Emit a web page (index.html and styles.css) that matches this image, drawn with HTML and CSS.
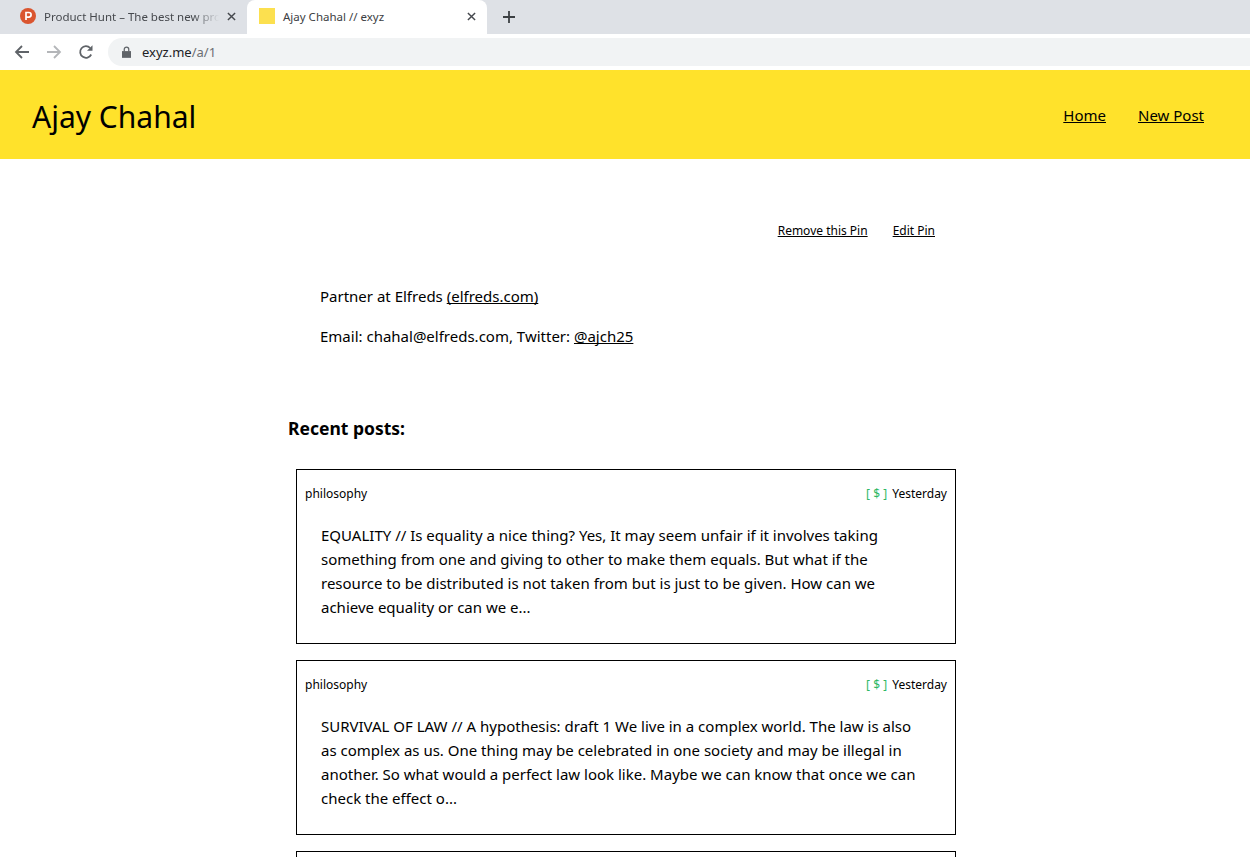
FILE: index.html
```html
<!DOCTYPE html>
<html lang="en">
<head>
    <meta charset="UTF-8">
    <title>Ajay Chahal // exyz</title>
    <link rel="stylesheet" href="styles.css">
</head>
<body>

<!-- Browser tabs -->
<div class="tabbar">
    <div class="tab">
        <svg class="favicon" viewBox="0 0 16 16"><circle cx="8" cy="8" r="8" fill="#da552f"/><path d="M6 12V4.5h2.8a2.3 2.3 0 0 1 0 4.6H6" fill="none" stroke="#fff" stroke-width="1.7"/></svg>
        <span class="tab-title tab-title-fade">Product Hunt – The best new pro</span>
        <svg class="tab-close" viewBox="0 0 10 10"><path d="M1 1l8 8M9 1l-8 8" stroke="#45484d" stroke-width="1.6"/></svg>
    </div>
    <div class="tab tab-active">
        <span class="favicon-square"></span>
        <span class="tab-title">Ajay Chahal // exyz</span>
        <svg class="tab-close" viewBox="0 0 10 10"><path d="M1 1l8 8M9 1l-8 8" stroke="#45484d" stroke-width="1.6"/></svg>
    </div>
    <svg class="new-tab" viewBox="0 0 12 12"><path d="M6 0v12M0 6h12" stroke="#3c4043" stroke-width="1.8"/></svg>
</div>

<!-- Browser toolbar -->
<div class="toolbar">
    <svg class="nav-icon" viewBox="0 0 16 16"><path d="M15 8H2M8 2L2 8l6 6" fill="none" stroke="#5f6368" stroke-width="1.8"/></svg>
    <svg class="nav-icon" viewBox="0 0 16 16"><path d="M1 8h13M8 2l6 6-6 6" fill="none" stroke="#b4b6b9" stroke-width="1.8"/></svg>
    <svg class="nav-icon" viewBox="0 0 16 16"><path d="M13.2 10.5A5.8 5.8 0 1 1 12.2 4" fill="none" stroke="#5f6368" stroke-width="1.8"/><path d="M14.5 1.2v5.6H9z" fill="#5f6368"/></svg>
    <div class="omnibox">
        <svg class="lock" viewBox="0 0 10 13"><path d="M0 5.5h10V13H0z" fill="#5f6368"/><path d="M2.5 6V3.5a2.5 2.5 0 0 1 5 0V6" fill="none" stroke="#5f6368" stroke-width="1.4"/></svg>
        <span class="url">exyz.me<span class="url-path">/a/1</span></span>
    </div>
</div>

<!-- Site header -->
<header class="site-header">
    <h1>Ajay Chahal</h1>
    <nav class="site-nav">
        <a href="#">Home</a>
        <a href="#">New Post</a>
    </nav>
</header>

<main class="content">
    <div class="pin-actions">
        <a href="#">Remove this Pin</a>
        <a href="#">Edit Pin</a>
    </div>

    <div class="bio">
        <p>Partner at Elfreds <a href="#">(elfreds.com)</a></p>
        <p>Email: chahal@elfreds.com, Twitter: <a href="#">@ajch25</a></p>
    </div>

    <h2>Recent posts:</h2>

    <div class="post">
        <div class="post-meta">
            <span>philosophy</span>
            <span><span class="paid">[ $ ]</span> Yesterday</span>
        </div>
        <p class="post-text">EQUALITY // Is equality a nice thing? Yes, It may seem unfair if it involves taking something from one and giving to other to make them equals. But what if the resource to be distributed is not taken from but is just to be given. How can we achieve equality or can we e...</p>
    </div>

    <div class="post">
        <div class="post-meta">
            <span>philosophy</span>
            <span><span class="paid">[ $ ]</span> Yesterday</span>
        </div>
        <p class="post-text">SURVIVAL OF LAW // A hypothesis: draft 1 We live in a complex world. The law is also as complex as us. One thing may be celebrated in one society and may be illegal in another. So what would a perfect law look like. Maybe we can know that once we can check the effect o...</p>
    </div>

    <div class="post post-empty"></div>
</main>

</body>
</html>
```

FILE: styles.css
```css
html, body {
    height: 100%;
    overflow: hidden;
}

body {
    margin: 0;
    font-family: 'Noto Sans', sans-serif;
    color: #000;
    background-color: #fff;
}

a {
    color: #000;
    text-decoration-skip-ink: none;
}

/* Browser chrome */
.tabbar {
    height: 34px;
    background-color: #dee1e6;
    display: flex;
    align-items: flex-end;
    padding-left: 8px;
}

.tab {
    width: 239px;
    height: 34px;
    padding: 0 8px 2px 12px;
    box-sizing: border-box;
    display: flex;
    align-items: center;
    font-size: 11.5px;
    color: #45484d;
}

.tab-active {
    width: 240px;
    background-color: #fff;
    border-radius: 8px 8px 0 0;
    color: #3c4043;
}

.favicon {
    width: 16px;
    height: 16px;
    flex: none;
}

.favicon-square {
    width: 16px;
    height: 16px;
    flex: none;
    background-color: #fce04f;
}

.tab-title {
    flex: 1;
    min-width: 0;
    margin-left: 8px;
    white-space: nowrap;
}

/* Long tab titles fade out before the close button */
.tab-title-fade {
    -webkit-mask-image: linear-gradient(to right, #000 85%, transparent 100%);
    mask-image: linear-gradient(to right, #000 85%, transparent 100%);
}

.tab-close {
    width: 9px;
    height: 9px;
    flex: none;
    margin: 0 3px 0 8px;
}

.new-tab {
    width: 12px;
    height: 12px;
    margin: 0 0 11px 16px;
}

.toolbar {
    height: 36px;
    display: flex;
    align-items: center;
    padding-left: 14px;
    gap: 16px;
}

.nav-icon {
    width: 16px;
    height: 16px;
    flex: none;
}

.omnibox {
    flex: 1;
    height: 28px;
    margin-left: -2px;
    padding-left: 14px;
    background-color: #f1f3f4;
    border-radius: 14px 0 0 14px;
    display: flex;
    align-items: center;
    font-size: 13px;
}

.lock {
    width: 9px;
    height: 12px;
    margin-right: 11px;
}

.url {
    color: #202124;
}

.url-path {
    color: #6b6e72;
}

/* Site header */
.site-header {
    height: 89px;
    background-color: #ffe22b;
    display: flex;
    align-items: center;
    justify-content: space-between;
    padding: 0 46px 0 32px;
}

.site-header h1 {
    margin: 4px 0 0;
    font-size: 30px;
    font-weight: 400;
}

.site-nav {
    display: flex;
    gap: 32px;
    font-size: 15px;
}

/* Main column */
.content {
    width: 676px;
    margin-left: 288px;
}

.pin-actions {
    display: flex;
    justify-content: flex-end;
    gap: 25px;
    padding: 62px 29px 0 0;
    font-size: 12px;
    line-height: 20px;
}

.bio {
    padding: 43px 0 0 32px;
    font-size: 15px;
    line-height: 24px;
}

.bio p {
    margin: 0 0 16px;
}

h2 {
    margin: 66px 0 0;
    font-size: 17.5px;
    line-height: 28px;
    font-weight: 700;
}

.post {
    width: 660px;
    height: 175px;
    box-sizing: border-box;
    margin: 0 0 16px 8px;
    border: 1px solid #000;
    padding: 15px 8px 0;
}

h2 + .post {
    margin-top: 27px;
}

.post-meta {
    display: flex;
    justify-content: space-between;
    font-size: 12px;
    line-height: 18px;
}

.paid {
    color: #2fb864;
    margin-right: 2px;
}

.post-text {
    margin: 20px 21px 0 16px;
    font-size: 15px;
    line-height: 24px;
}
```
